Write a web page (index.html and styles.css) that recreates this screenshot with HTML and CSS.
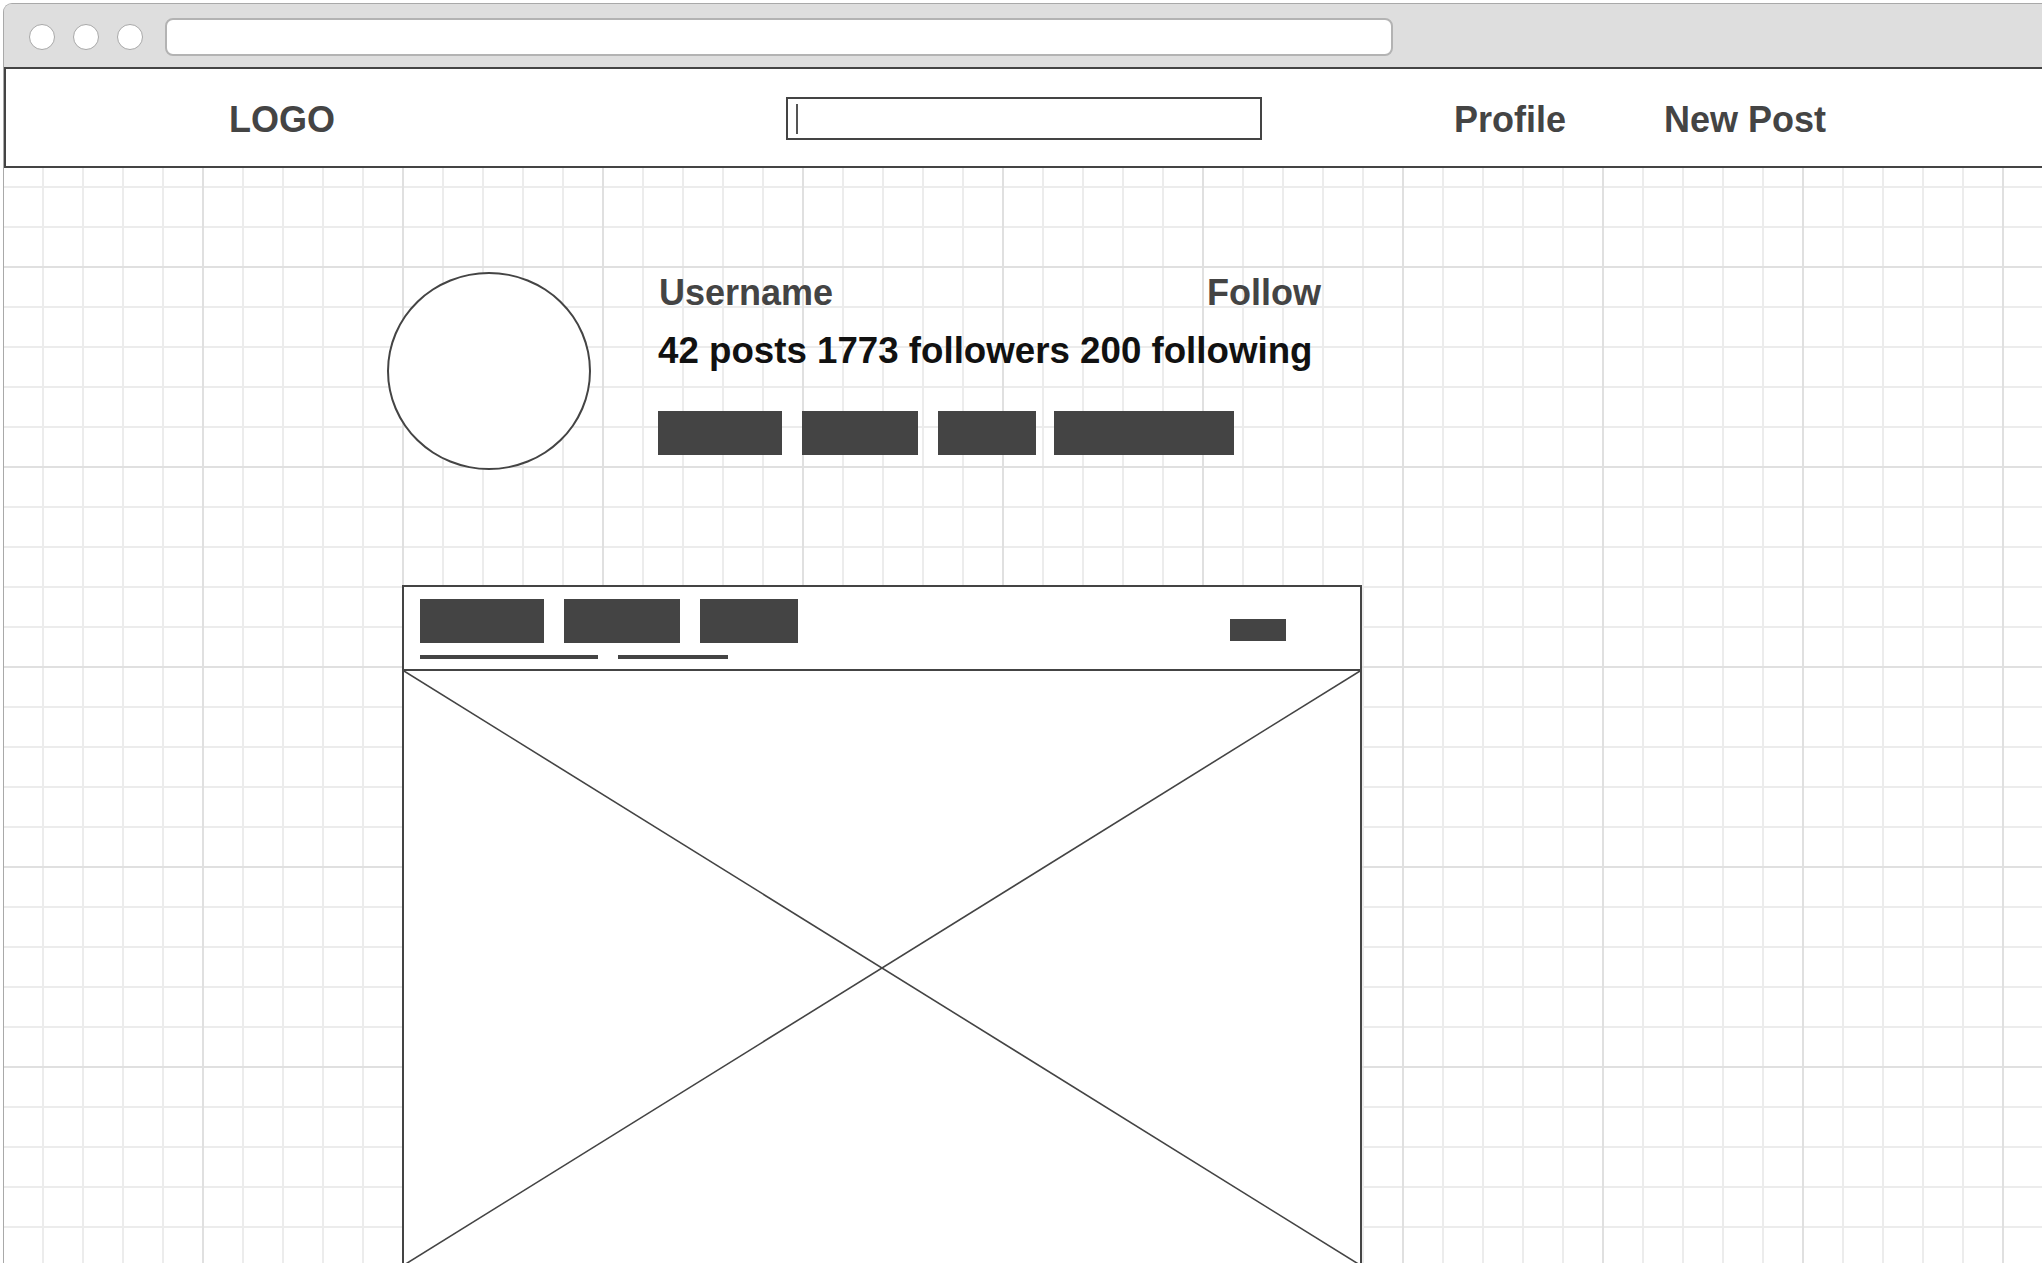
FILE: index.html
```html
<!DOCTYPE html>
<html lang="en">
<head>
<meta charset="utf-8">
<title>Profile wireframe</title>
<link rel="stylesheet" href="styles.css">
</head>
<body>
<div class="window">
  <div class="chrome">
    <span class="dot"></span>
    <span class="dot"></span>
    <span class="dot"></span>
    <div class="url"></div>
  </div>
  <header class="nav">
    <div class="logo">LOGO</div>
    <div class="search"><span class="caret"></span></div>
    <a class="nav-link nav-profile">Profile</a>
    <a class="nav-link nav-new">New Post</a>
  </header>
  <main class="canvas">
    <section class="profile">
      <div class="avatar"></div>
      <div class="info">
        <div class="info-top">
          <span class="username">Username</span>
          <span class="follow">Follow</span>
        </div>
        <div class="stats">42 posts 1773 followers 200 following</div>
        <div class="tags">
          <span class="tag tag-1"></span>
          <span class="tag tag-2"></span>
          <span class="tag tag-3"></span>
          <span class="tag tag-4"></span>
        </div>
      </div>
    </section>
    <article class="post">
      <div class="post-head">
        <div class="post-meta">
          <div class="meta-blocks">
            <span class="block block-1"></span>
            <span class="block block-2"></span>
            <span class="block block-3"></span>
          </div>
          <div class="meta-lines">
            <span class="line line-1"></span>
            <span class="line line-2"></span>
          </div>
        </div>
        <span class="post-action"></span>
      </div>
      <div class="post-image">
        <svg class="placeholder" viewBox="0 0 956 594" preserveAspectRatio="none">
          <line x1="0" y1="0" x2="956" y2="594"></line>
          <line x1="956" y1="0" x2="0" y2="594"></line>
        </svg>
      </div>
    </article>
  </main>
</div>
</body>
</html>
```
FILE: styles.css
```css
html, body {
  margin: 0;
  padding: 0;
  background: #ffffff;
  overflow: hidden;
}

body {
  font-family: "Liberation Sans", Arial, Helvetica, sans-serif;
  height: 1263px;
}

.window {
  margin: 3px 0 0 3px;
  border-top: 1px solid #a9a9a9;
  border-left: 1px solid #a9a9a9;
  border-top-left-radius: 9px;
  overflow: hidden;
  background: #dedede;
}

.chrome {
  height: 63px;
  box-sizing: border-box;
  padding-top: 3px;
  display: flex;
  align-items: center;
  padding-left: 25px;
  background: #dedede;
}

.dot {
  width: 26px;
  height: 26px;
  box-sizing: border-box;
  border-radius: 50%;
  background: #ffffff;
  border: 1.5px solid #a8a8a8;
  margin-right: 18px;
}

.dot:nth-child(3) {
  margin-right: 22px;
}

.url {
  width: 1228px;
  height: 38px;
  box-sizing: border-box;
  background: #ffffff;
  border: 2px solid #b3b3b3;
  border-radius: 8px;
}

.nav {
  height: 101px;
  box-sizing: border-box;
  border-top: 2px solid #444444;
  border-bottom: 2px solid #444444;
  border-left: 2px solid #444444;
  background: #ffffff;
  display: flex;
  align-items: flex-start;
  padding-top: 28px;
  padding-left: 223px;
  box-shadow: -4px 0 0 #cacaca;
}

.logo,
.nav-link {
  font-size: 36px;
  line-height: 40px;
  font-weight: 700;
  color: #444444;
  margin-top: 3px;
  white-space: nowrap;
}

.search {
  width: 476px;
  height: 43px;
  box-sizing: border-box;
  border: 2px solid #444444;
  margin-left: 451px;
  display: flex;
  align-items: center;
  padding-left: 8px;
  background: #ffffff;
}

.caret {
  width: 2px;
  height: 30px;
  background: #555555;
}

.nav-profile {
  margin-left: 192px;
}

.nav-new {
  margin-left: 98px;
}

.canvas {
  min-height: 1200px;
  background-color: #ffffff;
  background-image:
    linear-gradient(to right, #e0e0e0 2px, transparent 2px),
    linear-gradient(to bottom, #e0e0e0 2px, transparent 2px),
    linear-gradient(to right, #ececec 2px, transparent 2px),
    linear-gradient(to bottom, #ececec 2px, transparent 2px);
  background-size: 200px 200px, 200px 200px, 40px 40px, 40px 40px;
  background-position: 198px 0, 0 98px, 38px 0, 0 18px;
  box-shadow: -4px 0 0 #cacaca;
  padding-top: 104px;
  display: flex;
  flex-direction: column;
  align-items: flex-start;
}

.profile {
  display: flex;
  align-items: flex-start;
  margin-left: 383px;
}

.avatar {
  width: 204px;
  height: 198px;
  box-sizing: border-box;
  border: 2px solid #444444;
  border-radius: 50%;
  background: #ffffff;
}

.info {
  margin-left: 67px;
  width: 663px;
}

.info-top {
  display: flex;
  justify-content: space-between;
  font-size: 36px;
  line-height: 40px;
  font-weight: 700;
  color: #444444;
  padding-top: 1px;
}

.username {
  padding-left: 1px;
}

.stats {
  margin-top: 18px;
  font-size: 36.7px;
  line-height: 40px;
  font-weight: 700;
  color: #111111;
  white-space: nowrap;
}

.tags {
  margin-top: 40px;
  display: flex;
}

.tag {
  height: 44px;
  background: #444444;
  margin-right: 20px;
}

.tag-1 { width: 124px; }
.tag-2 { width: 116px; }
.tag-3 { width: 98px; margin-right: 18px; }
.tag-4 { width: 180px; margin-right: 0; }

.post {
  margin-top: 115px;
  margin-left: 398px;
  width: 960px;
  box-sizing: border-box;
  border: 2px solid #444444;
  background: #ffffff;
}

.post-head {
  height: 84px;
  box-sizing: border-box;
  border-bottom: 2px solid #444444;
  padding: 12px 74px 0 16px;
  display: flex;
  justify-content: space-between;
  align-items: flex-start;
}

.meta-blocks {
  display: flex;
  gap: 20px;
}

.block {
  height: 44px;
  background: #444444;
}

.block-1 { width: 124px; }
.block-2 { width: 116px; }
.block-3 { width: 98px; }

.meta-lines {
  margin-top: 12px;
  display: flex;
  gap: 20px;
}

.line {
  height: 4px;
  background: #444444;
}

.line-1 { width: 178px; }
.line-2 { width: 110px; }

.post-action {
  width: 56px;
  height: 22px;
  margin-top: 20px;
  background: #444444;
}

.post-image {
  height: 594px;
}

.placeholder {
  display: block;
  width: 100%;
  height: 100%;
}

.placeholder line {
  stroke: #444444;
  stroke-width: 1.6;
  vector-effect: non-scaling-stroke;
}
```
